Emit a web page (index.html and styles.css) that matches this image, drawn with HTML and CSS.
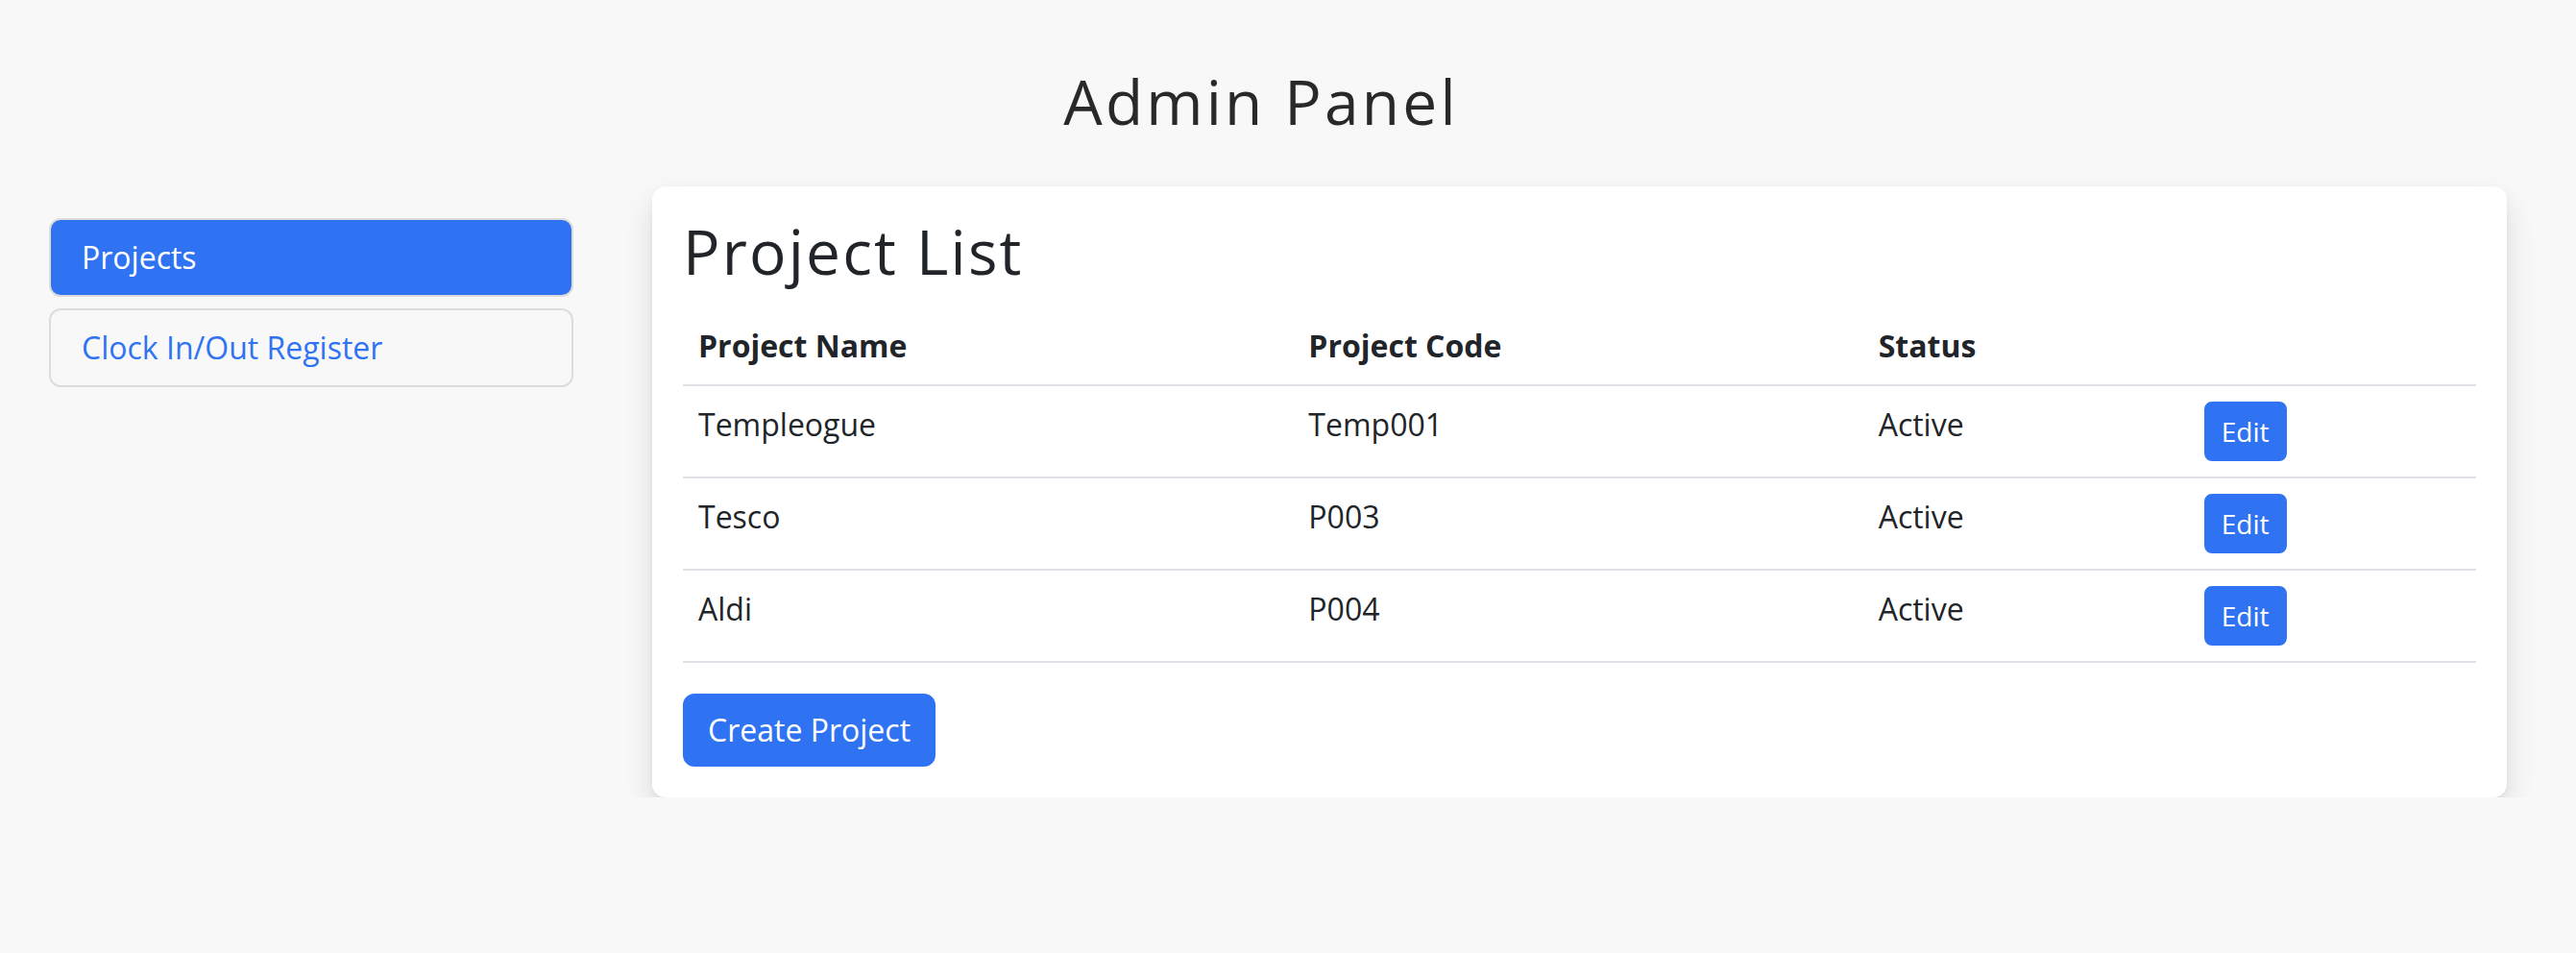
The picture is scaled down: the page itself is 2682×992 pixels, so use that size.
FILE: index.html
```html
<!DOCTYPE html>
<html lang="en">
<head>
<meta charset="utf-8">
<title>Admin Panel</title>
<link rel="stylesheet" href="styles.css">
</head>
<body>
  <header class="page-header">
    <h1 class="page-title">Admin Panel</h1>
  </header>
  <div class="layout">
    <nav class="sidebar">
      <a class="nav-item active" href="#">Projects</a>
      <a class="nav-item" href="#">Clock In/Out Register</a>
    </nav>
    <main class="card">
      <h2 class="card-title">Project List</h2>
      <table class="table">
        <thead>
          <tr>
            <th class="col-name">Project Name</th>
            <th class="col-code">Project Code</th>
            <th class="col-status">Status</th>
            <th class="col-action"></th>
          </tr>
        </thead>
        <tbody>
          <tr>
            <td>Templeogue</td>
            <td>Temp001</td>
            <td>Active</td>
            <td><button class="btn btn-sm">Edit</button></td>
          </tr>
          <tr>
            <td>Tesco</td>
            <td>P003</td>
            <td>Active</td>
            <td><button class="btn btn-sm">Edit</button></td>
          </tr>
          <tr>
            <td>Aldi</td>
            <td>P004</td>
            <td>Active</td>
            <td><button class="btn btn-sm">Edit</button></td>
          </tr>
        </tbody>
      </table>
      <button class="btn btn-md">Create Project</button>
    </main>
  </div>
</body>
</html>
```
FILE: styles.css
```css
* {
  box-sizing: border-box;
}

html, body {
  margin: 0;
  padding: 0;
}

body {
  background: #f8f8f8;
  color: #212529;
  font-family: "Open Sans", "Noto Sans", sans-serif;
  font-size: 32px;
  line-height: 48px;
}

.page-header {
  padding: 67px 56px 0 0;
  text-align: center;
}

.page-title {
  margin: 0;
  font-family: "Open Sans", sans-serif;
  font-weight: 400;
  font-size: 64px;
  line-height: 77px;
  letter-spacing: 3.2px;
  color: #292929;
}

.layout {
  display: flex;
  align-items: flex-start;
  gap: 82px;
  padding: 0 72px 0 51px;
  margin-top: 50px;
}

.sidebar {
  width: 546px;
  flex: none;
  display: flex;
  flex-direction: column;
  gap: 12px;
  margin-top: 33px;
}

.nav-item {
  display: block;
  padding: 15px 32px;
  border: 2px solid #dcdcdc;
  border-radius: 12px;
  color: #2f73f3;
  text-decoration: none;
  line-height: 48px;
}

.nav-item.active {
  background: #2f73f3;
  color: #ffffff;
}

.card {
  flex: 1;
  background: #ffffff;
  border-radius: 14px;
  padding: 32px;
  box-shadow: 0 16px 32px rgba(0, 0, 0, 0.12), 0 2px 6px rgba(0, 0, 0, 0.04);
}

.card-title {
  margin: 0 0 22px;
  font-family: "Open Sans", sans-serif;
  font-weight: 400;
  font-size: 64px;
  line-height: 72px;
  letter-spacing: 2.2px;
  color: #212529;
}

.table {
  width: 100%;
  border-collapse: collapse;
  table-layout: fixed;
  margin-bottom: 32px;
}

.table th,
.table td {
  padding: 16px;
  text-align: left;
  vertical-align: top;
  border-bottom: 2px solid #dee2e6;
}

.table th {
  font-weight: 700;
}

.col-name { width: 635px; }
.col-code { width: 593px; }
.col-status { width: 339px; }
.col-action { width: 299px; }

.btn {
  display: inline-block;
  background: #2f73f3;
  border: 2px solid #2f73f3;
  color: #ffffff;
  font-family: "Open Sans", sans-serif;
  cursor: pointer;
}

.btn-sm {
  font-size: 28px;
  line-height: 42px;
  padding: 8px 16px;
  border-radius: 8px;
}

.btn-md {
  font-size: 32px;
  line-height: 48px;
  padding: 12px 24px;
  border-radius: 12px;
}
```
